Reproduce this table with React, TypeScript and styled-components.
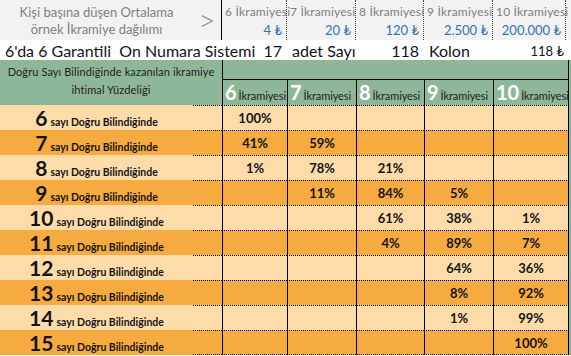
import styled, { createGlobalStyle } from "styled-components";

const GlobalStyle = createGlobalStyle`
  body {
    margin: 0;
    background: #ffffff;
    font-family: "Lato", "Open Sans", "DejaVu Sans", sans-serif;
    color: #141414;
  }
`;

const COLS = "193px 29px 65px 69px 68px 69px 76px";

const Sheet = styled.div`
  width: 571px;
  display: flex;
  flex-direction: column;
`;

const TopBand = styled.div`
  display: grid;
  grid-template-columns: ${COLS};
  height: 40px;
  background: #f2f2f2;
`;

const Caption = styled.div`
  display: flex;
  flex-direction: column;
  align-items: center;
  justify-content: center;
  font-size: 13px;
  color: #808080;
  line-height: 17px;
  white-space: nowrap;
  padding-top: 1px;
`;

const Arrow = styled.div`
  display: flex;
  align-items: center;
  justify-content: center;
  font-size: 30px;
  font-weight: 300;
  color: #8c8c8c;
  border-right: 1px solid #000;
  padding-bottom: 2px;
`;

const Prize = styled.div<{ $last?: boolean }>`
  display: flex;
  flex-direction: column;
  justify-content: space-between;
  padding: 4px 4px 2px 3px;
  border-right: 1px dotted #444;
  ${(p) => (p.$last ? "margin-right: 3px;" : "")}
`;

const PrizeName = styled.span`
  font-size: 12px;
  color: #7f7f7f;
  white-space: nowrap;
  letter-spacing: 0.2px;
`;

const PrizeValue = styled.span`
  font-size: 13px;
  color: #2e75b6;
  text-align: right;
`;

const InfoRow = styled.div`
  display: grid;
  grid-template-columns: ${COLS};
  height: 19px;
  padding-top: 1px;
  font-size: 16px;
  line-height: 20px;
`;

const InfoCell = styled.div<{ $align?: string; $span?: number; $small?: boolean }>`
  grid-column: span ${(p) => p.$span ?? 1};
  text-align: ${(p) => p.$align ?? "left"};
  padding: 0 ${(p) => (p.$align === "right" ? "5px" : "0")} 0 ${(p) => (p.$align === "right" ? "0" : "5px")};
  font-size: ${(p) => (p.$small ? "13px" : "16px")};
  white-space: nowrap;
`;

const Table = styled.div`
  display: grid;
  grid-template-columns: ${COLS};
  grid-template-rows: 20px 25px repeat(10, 25px);
  background: #8eb79a;
`;

const HeadLabel = styled.div`
  grid-column: 1 / span 2;
  grid-row: 1 / span 2;
  display: flex;
  flex-direction: column;
  align-items: center;
  justify-content: center;
  font-size: 11px;
  letter-spacing: 0.1px;
  line-height: 18px;
  color: #1e1e1e;
  white-space: nowrap;
  padding: 0 0 4px 0;
`;

const HeadTop = styled.div`
  grid-column: 3 / span 5;
  border-left: 1px solid #000;
  border-bottom: 1px solid #000;
  border-right: 1px solid #000;
`;

const HeadCell = styled.div<{ $last?: boolean }>`
  display: flex;
  align-items: baseline;
  gap: 2px;
  padding: 0 0 0 2px;
  border-left: 1px solid #000;
  ${(p) => (p.$last ? "border-right: 1px solid #000;" : "")}
  white-space: nowrap;
  overflow: hidden;
`;

const HeadNum = styled.span`
  font-size: 20px;
  font-weight: 700;
  color: #ffffff;
  line-height: 25px;
`;

const HeadWord = styled.span`
  font-size: 11px;
  letter-spacing: -0.1px;
  color: #1e1e1e;
`;

const RowLabel = styled.div<{ $dark: boolean }>`
  display: flex;
  align-items: baseline;
  justify-content: center;
  gap: 3px;
  background: ${(p) => (p.$dark ? "#f6ab41" : "#fddcaa")};
  font-weight: 700;
`;

const LabelNum = styled.span`
  font-size: 21px;
  line-height: 25px;
`;

const LabelWord = styled.span`
  font-size: 10.5px;
`;

const Cell = styled.div<{ $dark: boolean; $edge?: "none" | "left" | "right"; $lastRow?: boolean }>`
  display: flex;
  align-items: center;
  justify-content: center;
  background: ${(p) => (p.$dark ? "#f6ab41" : "#fddcaa")};
  border-top: 1px dotted #000;
  ${(p) => (p.$lastRow ? "border-bottom: 1px dotted #000;" : "")}
  ${(p) => (p.$edge !== "none" ? "border-left: 1px solid #000;" : "")}
  ${(p) => (p.$edge === "right" ? "border-right: 1px solid #000;" : "")}
  font-size: 13px;
  font-weight: 700;
  box-sizing: border-box;
`;

const prizes = [
  { name: "6 İkramiyesi", value: "4 ₺" },
  { name: "7 İkramiyesi", value: "20 ₺" },
  { name: "8 İkramiyesi", value: "120 ₺" },
  { name: "9 İkramiyesi", value: "2.500 ₺" },
  { name: "10 İkramiyesi", value: "200.000 ₺" },
];

const rows: [number, string[]][] = [
  [6, ["100%", "", "", "", ""]],
  [7, ["41%", "59%", "", "", ""]],
  [8, ["1%", "78%", "21%", "", ""]],
  [9, ["", "11%", "84%", "5%", ""]],
  [10, ["", "", "61%", "38%", "1%"]],
  [11, ["", "", "4%", "89%", "7%"]],
  [12, ["", "", "", "64%", "36%"]],
  [13, ["", "", "", "8%", "92%"]],
  [14, ["", "", "", "1%", "99%"]],
  [15, ["", "", "", "", "100%"]],
];

export default function App() {
  return (
    <>
      <GlobalStyle />
      <Sheet>
        <TopBand>
          <Caption>
            <span>Kişi başına düşen Ortalama</span>
            <span>örnek İkramiye dağılımı</span>
          </Caption>
          <Arrow>&gt;</Arrow>
          {prizes.map((p, i) => (
            <Prize key={p.name} $last={i === prizes.length - 1}>
              <PrizeName>{p.name}</PrizeName>
              <PrizeValue>{p.value}</PrizeValue>
            </Prize>
          ))}
        </TopBand>

        <InfoRow>
          <InfoCell $span={2}>6'da 6 Garantili&nbsp; On Numara Sistemi</InfoCell>
          <InfoCell $align="right">17</InfoCell>
          <InfoCell>adet Sayı</InfoCell>
          <InfoCell $align="right">118</InfoCell>
          <InfoCell>Kolon</InfoCell>
          <InfoCell $align="right" $small>
            118 ₺
          </InfoCell>
        </InfoRow>

        <Table>
          <HeadLabel>
            <span>Doğru Sayı Bilindiğinde kazanılan ikramiye</span>
            <span>ihtimal Yüzdeliği</span>
          </HeadLabel>
          <HeadTop />
          {[6, 7, 8, 9, 10].map((n, i) => (
            <HeadCell key={n} $last={i === 4}>
              <HeadNum>{n}</HeadNum>
              <HeadWord>İkramiyesi</HeadWord>
            </HeadCell>
          ))}

          {rows.map(([n, vals], r) => {
            const dark = r % 2 === 1;
            const lastRow = r === rows.length - 1;
            return [
              <RowLabel key={`l${n}`} $dark={dark}>
                <LabelNum>{n}</LabelNum>
                <LabelWord>sayı Doğru Bilindiğinde</LabelWord>
              </RowLabel>,
              <Cell key={`s${n}`} $dark={dark} $edge="none" $lastRow={lastRow} />,
              ...vals.map((v, c) => (
                <Cell
                  key={`c${n}-${c}`}
                  $dark={dark}
                  $edge={c === vals.length - 1 ? "right" : "left"}
                  $lastRow={lastRow}
                >
                  {v}
                </Cell>
              )),
            ];
          })}
        </Table>
      </Sheet>
    </>
  );
}
